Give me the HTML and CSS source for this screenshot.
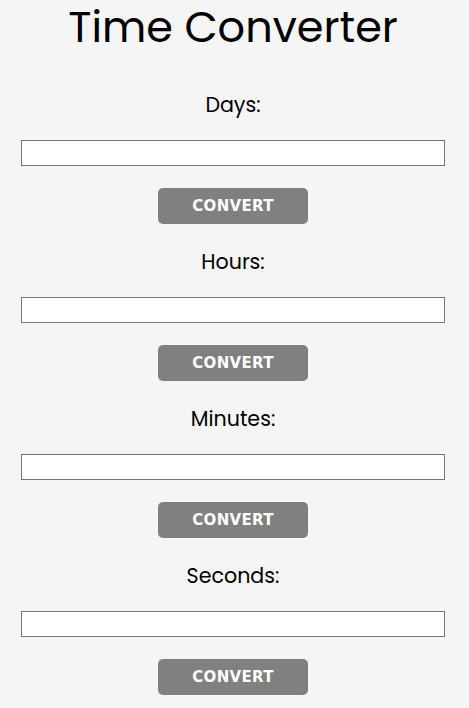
FILE: index.html
```html
<!DOCTYPE html>
<html lang="en">
<head>
<meta charset="utf-8">
<title>Time Converter</title>
<link rel="stylesheet" href="styles.css">
</head>
<body>
<main class="app">
  <h1 class="title">Time Converter</h1>
  <div class="field">
    <label class="label" for="days">Days:</label>
    <input class="input" id="days" type="text">
    <button class="btn" type="button">CONVERT</button>
  </div>
  <div class="field">
    <label class="label" for="hours">Hours:</label>
    <input class="input" id="hours" type="text">
    <button class="btn" type="button">CONVERT</button>
  </div>
  <div class="field">
    <label class="label" for="minutes">Minutes:</label>
    <input class="input" id="minutes" type="text">
    <button class="btn" type="button">CONVERT</button>
  </div>
  <div class="field">
    <label class="label" for="seconds">Seconds:</label>
    <input class="input" id="seconds" type="text">
    <button class="btn" type="button">CONVERT</button>
  </div>
</main>
</body>
</html>
```
FILE: styles.css
```css
html, body {
  margin: 0;
  padding: 0;
  background: #f5f5f5;
}
body {
  font-family: Poppins, Inter, "Noto Sans", sans-serif;
  color: #000;
}
.app {
  display: flex;
  flex-direction: column;
  align-items: stretch;
  padding-right: 3px;
}
.title {
  margin: 0 0 39px 0;
  font-size: 43px;
  line-height: 54px;
  font-weight: 400;
  text-align: center;
}
.field {
  display: flex;
  flex-direction: column;
  align-items: center;
  margin-bottom: 26px;
}
.label {
  font-size: 20.6px;
  line-height: 24px;
  margin-bottom: 23px;
}
.input {
  box-sizing: border-box;
  align-self: stretch;
  margin: 0 21px 22px 21px;
  height: 26px;
  border: 1px solid #767676;
  background: #fff;
  padding: 0 4px;
  font-size: 14px;
  outline: none;
}
.btn {
  width: 150px;
  height: 36px;
  border: none;
  border-radius: 5px;
  background: #808080;
  color: #fff;
  font-family: "DejaVu Sans", Verdana, sans-serif;
  font-weight: 700;
  font-size: 15px;
  letter-spacing: 0.3px;
  padding: 0;
  cursor: pointer;
}
```
